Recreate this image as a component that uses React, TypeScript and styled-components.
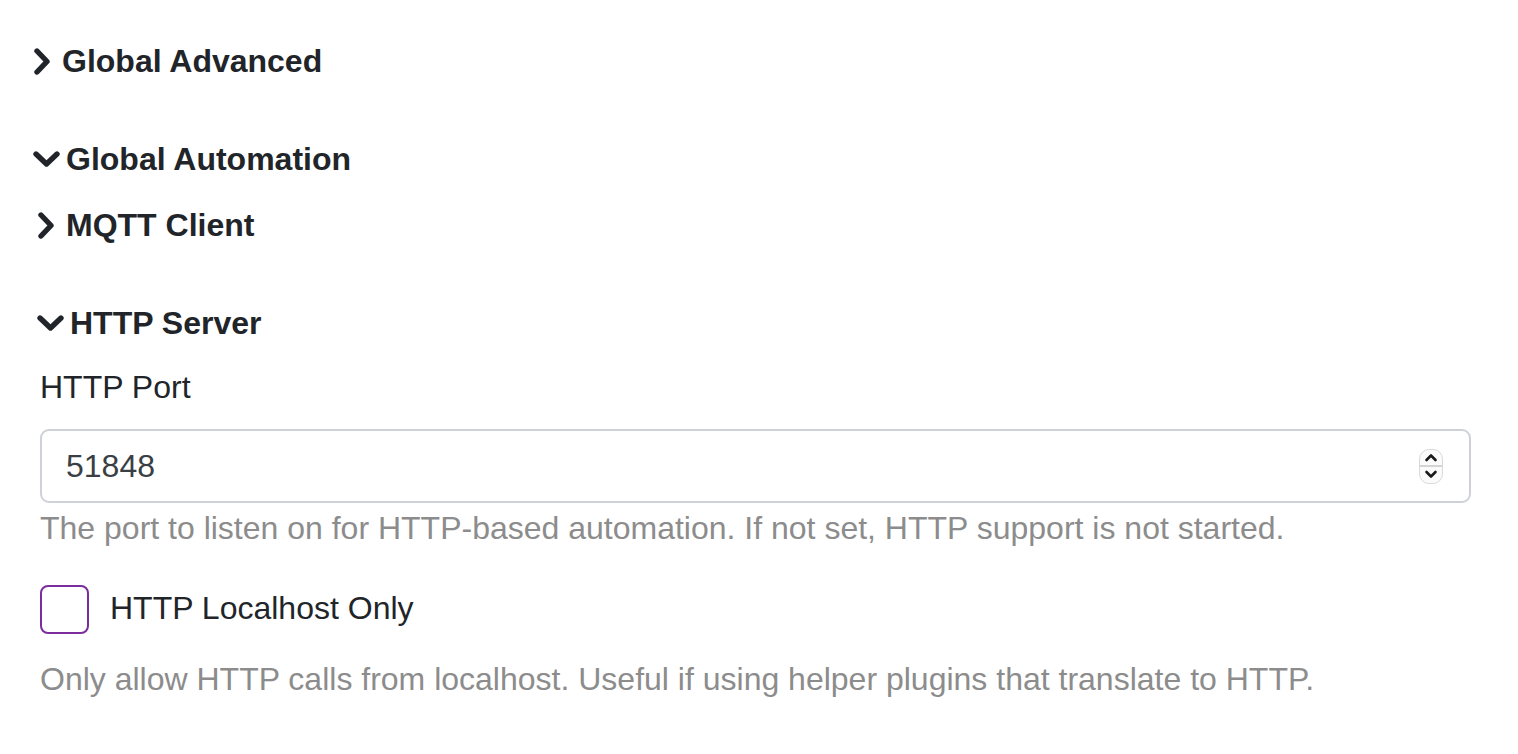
import React from "react";
import styled, { createGlobalStyle } from "styled-components";

const Global = createGlobalStyle`
  html, body { margin: 0; padding: 0; background: #ffffff; }
  body { font-family: "Liberation Sans", Arial, Helvetica, sans-serif; color: #212529; }
`;

const Page = styled.div`
  padding: 42px 47px 0 33px;
`;

const Section = styled.section<{ $nested?: boolean; $open?: boolean }>`
  margin-left: ${(p) => (p.$nested ? "4px" : "0")};
  margin-bottom: ${(p) => (p.$open ? "0" : "60px")};
`;

const Heading = styled.div`
  display: flex;
  align-items: center;
  height: 38px;
  margin-bottom: 28px;
  font-size: 32px;
  font-weight: 700;
  color: #212529;
`;

const IconBox = styled.span<{ $open?: boolean }>`
  display: inline-flex;
  align-items: center;
  justify-content: center;
  width: ${(p) => (p.$open ? "27px" : "16px")};
  margin-right: ${(p) => (p.$open ? "6px" : "12px")};
  margin-left: ${(p) => (p.$open ? "0" : "1px")};
`;

const Body = styled.div``;

const Field = styled.div`
  margin-left: 3px;
`;

const Label = styled.label`
  display: block;
  font-size: 32px;
  line-height: 34px;
  color: #212529;
`;

const InputBox = styled.div`
  margin-top: 25px;
  display: flex;
  align-items: center;
  height: 74px;
  box-sizing: border-box;
  border: 2px solid #ced2d8;
  border-radius: 9px;
  padding: 0 26px 0 24px;
  background: #fff;
`;

const NumberInput = styled.input`
  flex: 1;
  border: none;
  outline: none;
  background: transparent;
  font-family: "Liberation Sans", Arial, Helvetica, sans-serif;
  font-size: 32px;
  color: #3a3f45;
  padding: 0;
`;

const Spinner = styled.div`
  display: flex;
  flex-direction: column;
  width: 24px;
  height: 35px;
  border: 1px solid #d9d9d9;
  border-radius: 10px;
  box-sizing: border-box;
  overflow: hidden;
  background: #fbfbfb;
`;

const SpinHalf = styled.div<{ $top?: boolean }>`
  flex: 1;
  display: flex;
  align-items: center;
  justify-content: center;
  border-bottom: ${(p) => (p.$top ? "2px solid #d4d4d4" : "none")};
`;

const Help = styled.div<{ $gap: number }>`
  margin-top: ${(p) => p.$gap}px;
  font-size: 32px;
  line-height: 48px;
  color: #8c8c8c;
`;

const CheckRow = styled.div`
  margin-top: 33px;
  display: flex;
  align-items: center;
  gap: 21px;
`;

const CheckBox = styled.span`
  display: inline-block;
  width: 49px;
  height: 49px;
  box-sizing: border-box;
  border: 2px solid #7b2d9e;
  border-radius: 8px;
  background: #fff;
`;

const CheckLabel = styled.span`
  font-size: 32px;
  line-height: 40px;
  color: #212529;
  margin-top: -4px;
`;

const Chevron: React.FC<{ open?: boolean }> = ({ open }) =>
  open ? (
    <svg width="27" height="18" viewBox="0 0 27 18">
      <polyline
        points="3,4 13.5,14 24,4"
        fill="none"
        stroke="#212529"
        strokeWidth="5.4"
        strokeLinecap="round"
        strokeLinejoin="round"
      />
    </svg>
  ) : (
    <svg width="16" height="27" viewBox="0 0 16 27">
      <polyline
        points="3,3 13,13.5 3,24"
        fill="none"
        stroke="#212529"
        strokeWidth="5.4"
        strokeLinecap="round"
        strokeLinejoin="round"
      />
    </svg>
  );

const SmallChevron: React.FC<{ up?: boolean }> = ({ up }) => (
  <svg width="14" height="9" viewBox="0 0 14 9">
    <polyline
      points={up ? "2.5,7 7,2.5 11.5,7" : "2.5,2 7,6.5 11.5,2"}
      fill="none"
      stroke="#1a1a1a"
      strokeWidth="2.6"
      strokeLinecap="round"
      strokeLinejoin="round"
    />
  </svg>
);

const SectionHeading: React.FC<{ title: string; open?: boolean }> = ({ title, open }) => (
  <Heading>
    <IconBox $open={open}>
      <Chevron open={open} />
    </IconBox>
    <span>{title}</span>
  </Heading>
);

export default function App() {
  return (
    <>
      <Global />
      <Page>
        <Section>
          <SectionHeading title="Global Advanced" />
        </Section>
        <Section $open>
          <SectionHeading title="Global Automation" open />
          <Body>
            <Section $nested>
              <SectionHeading title="MQTT Client" />
            </Section>
            <Section $nested $open>
              <SectionHeading title="HTTP Server" open />
              <Field>
                <Label>HTTP Port</Label>
                <InputBox>
                  <NumberInput type="text" defaultValue="51848" />
                  <Spinner>
                    <SpinHalf $top>
                      <SmallChevron up />
                    </SpinHalf>
                    <SpinHalf>
                      <SmallChevron />
                    </SpinHalf>
                  </Spinner>
                </InputBox>
                <Help $gap={1}>
                  The port to listen on for HTTP-based automation. If not set, HTTP support is not started.
                </Help>
                <CheckRow>
                  <CheckBox />
                  <CheckLabel>HTTP Localhost Only</CheckLabel>
                </CheckRow>
                <Help $gap={21}>
                  Only allow HTTP calls from localhost. Useful if using helper plugins that translate to HTTP.
                </Help>
              </Field>
            </Section>
          </Body>
        </Section>
      </Page>
    </>
  );
}
